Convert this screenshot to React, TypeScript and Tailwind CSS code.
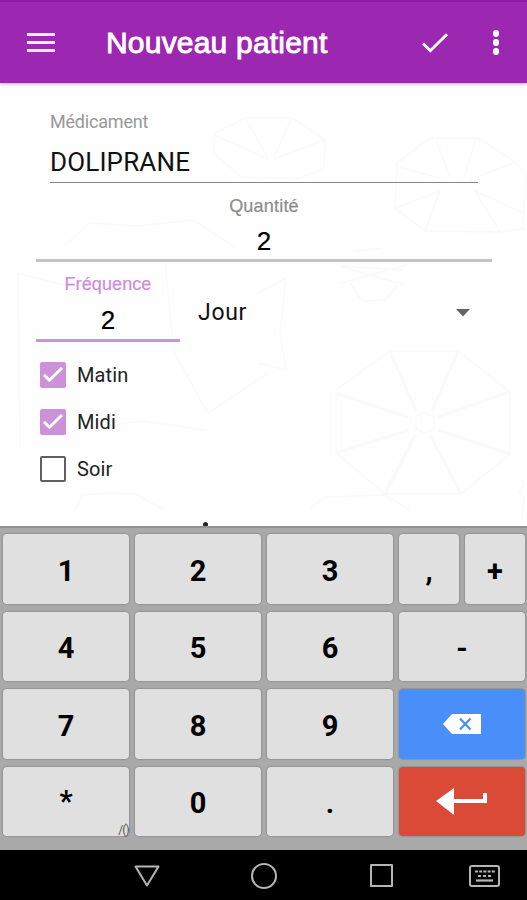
import React from "react";

function Check({ className, weight = 2.9 }: { className: string; weight?: number }) {
  return (
    <svg viewBox="0 0 26 20" className={className} fill="none" stroke="#fff" strokeWidth={weight}>
      <path d="M1 10.5 8.3 17.8 25 1.2" />
    </svg>
  );
}

function Backdrop() {
  return (
    <svg viewBox="0 0 527 443" className="absolute inset-0 h-full w-full" fill="none" stroke="#fafafa" strokeWidth="1.5">
      <path d="M390 268 458 268 510 309 510 371 461 411 385 411 336 370 336 307Z" />
      <path d="M390 268 416 328M458 268 432 328M336 310 408 334M510 309 438 334M336 370 408 347M510 371 438 347M385 411 415 352M461 411 430 352" strokeWidth="3" />
      <path d="M416 334 424 329 434 334 434 346 424 350 416 346Z" />
      <path d="M430 55 478 55 515 79 526 91 523 146 500 149 425 148 395 125 397 80Z M436 57 450 94M476 55 465 92M399 84 440 95M515 79 470 97M395 125 440 108 425 148M500 149 475 108 523 130" />
      <path d="M245 35 292 35 325 57 324 86 296 96 241 94 214 70 215 50Z M245 35 268 75M292 35 274 74M214 52 268 76M325 57 274 76" />
      <path d="M341 183 403 187M341 200 407 182M342 184 405 202M350 200 362 218 385 217 398 202M354 168 382 165" />
      <path d="M65 162 90 140 137 143 193 137 235 164M18 190 75 205M18 190 20 365M165 180 174 269 208 330 269 289M100 343 145 338 205 347M258 210 286 195 280 250 286 287 258 280" />
      <path d="M75 427 82 412 108 410 135 411 165 427M310 425 325 414 385 412 410 427M519 395 524 401 519 409 524 414 522 437" />
    </svg>
  );
}

function CheckRow({ label, checked }: { label: string; checked: boolean }) {
  return (
    <label className="flex h-[47px] items-center">
      <span
        className={
          checked
            ? "flex size-[26px] items-center justify-center rounded-[2px] bg-[#cc91d8]"
            : "block size-[26px] rounded-[2px] border-2 border-[#606060] bg-white"
        }
      >
        {checked && <Check className="h-[15px] w-5" weight={3.8} />}
      </span>
      <span className="ml-[11px] pt-px text-[20px] leading-6 tracking-[0.1px] text-[#222]">{label}</span>
    </label>
  );
}

function Key({ children, className = "bg-[#e0e0e0] pt-[5px]" }: { children: React.ReactNode; className?: string }) {
  return (
    <div
      className={`relative flex min-w-0 flex-1 items-center justify-center rounded-[4px] text-[29px] font-bold leading-none text-black shadow-[0_0_1px_1px_#949494] ${className}`}
    >
      {children}
    </div>
  );
}

export default function App() {
  return (
    <div className="flex h-[900px] w-[527px] flex-col overflow-hidden bg-[#fefefe] font-['Roboto',sans-serif]">
      <header className="relative z-10 flex h-[83px] shrink-0 items-center border-t-2 border-[#911ca3] bg-[#9c27b0] shadow-[0_1px_4px_rgba(0,0,0,0.3)]">
        <div className="ml-[27px] flex w-[28px] flex-col gap-[5px]">
          <span className="h-[3px] bg-[#fdeeff]" />
          <span className="h-[3px] bg-[#fdeeff]" />
          <span className="h-[3px] bg-[#fdeeff]" />
        </div>
        <h1 className="ml-[51px] whitespace-nowrap font-['Liberation_Sans',sans-serif] text-[30px] font-normal leading-9 tracking-[0.2px] text-white [-webkit-text-stroke:0.9px_white]">
          Nouveau patient
        </h1>
        <div className="mr-[28px] ml-auto flex items-center">
          <Check className="mr-[45px] h-[20px] w-[26px]" />
          <div className="flex flex-col gap-[2.5px]">
            <span className="size-[6.5px] rounded-full bg-white" />
            <span className="size-[6.5px] rounded-full bg-white" />
            <span className="size-[6.5px] rounded-full bg-white" />
          </div>
        </div>
      </header>

      <main className="relative h-[443px] shrink-0 overflow-hidden">
        <Backdrop />
        <div className="relative flex flex-col">
          <div className="mr-[49px] ml-[50px] flex h-[100px] flex-col border-b-[1.5px] border-[#858585] pt-[28px]">
            <span className="text-[18px] leading-[22px] tracking-[-0.2px] text-[#999]">Médicament</span>
            <span className="mt-[13px] text-[26px] leading-[32px] tracking-[0.15px] text-[#111]">DOLIPRANE</span>
          </div>
          <div className="mr-[35px] ml-[36px] flex h-[79px] flex-col items-center border-b-[3px] border-[#c3c3c3] pt-[12px] font-['Liberation_Sans',sans-serif]">
            <span className="text-[18px] leading-[22px] tracking-[0.2px] text-[#8c8c8c] [-webkit-text-stroke:0.2px_#8c8c8c]">Quantité</span>
            <span className="mt-[9px] text-[26px] leading-[30px] text-black [-webkit-text-stroke:0.2px_black]">2</span>
          </div>
          <div className="mr-[35px] ml-[36px] flex h-[80px]">
            <div className="flex w-[144px] flex-col items-center border-b-[3px] border-[#cc91d8] pt-[11px] font-['Liberation_Sans',sans-serif]">
              <span className="text-[18px] leading-[22px] tracking-[0.1px] text-[#d08bdc] [-webkit-text-stroke:0.2px_#d08bdc]">Fréquence</span>
              <span className="mt-[10px] text-[26px] leading-[30px] text-black [-webkit-text-stroke:0.2px_black]">2</span>
            </div>
            <div className="ml-[18px] flex flex-1 items-start justify-between pt-[36px] pr-[22px]">
              <span className="text-[23px] leading-[30px] tracking-[0.7px] text-[#111]">Jour</span>
              <svg viewBox="0 0 14 8" className="mt-[11px] h-[8px] w-[14px]">
                <path d="M0 0h14L7 7.5z" fill="#646464" />
              </svg>
            </div>
          </div>
          <div className="ml-10 flex flex-col pt-[9px]">
            <CheckRow label="Matin" checked />
            <CheckRow label="Midi" checked />
            <CheckRow label="Soir" checked={false} />
          </div>
          <div className="mt-[30px] ml-[203px] size-[5px] rounded-full bg-[#222]" />
        </div>
      </main>

      <section className="flex h-[323.5px] shrink-0 flex-col gap-2 border-t-2 border-[#929292] bg-[#a9a9a9] pt-[6px] pr-[2px] pb-[13.5px] pl-[3px]">
        <div className="flex flex-1 gap-[6px]">
          <Key>1</Key>
          <Key>2</Key>
          <Key>3</Key>
          <div className="flex min-w-0 flex-1 gap-[6px]">
            <Key>,</Key>
            <Key>+</Key>
          </div>
        </div>
        <div className="flex flex-1 gap-[6px]">
          <Key>4</Key>
          <Key>5</Key>
          <Key>6</Key>
          <Key>-</Key>
        </div>
        <div className="flex flex-1 gap-[6px]">
          <Key>7</Key>
          <Key>8</Key>
          <Key>9</Key>
          <Key className="bg-[#4a8ef9]">
            <svg viewBox="0 0 38 20" className="h-5 w-[38px]">
              <path d="M0 10 9 0h29v20H9z" fill="#fff" />
              <path d="m17 4.5 10.5 11M27.5 4.5 17 15.5" stroke="#4a8ef9" strokeWidth="2.2" fill="none" />
            </svg>
          </Key>
        </div>
        <div className="flex flex-1 gap-[6px]">
          <Key className="bg-[#e0e0e0] pt-px">
            *
            <span className="absolute right-0 bottom-0 text-[12px] font-normal leading-[12px] tracking-[-0.8px] text-[#555]">/()</span>
          </Key>
          <Key>0</Key>
          <Key>.</Key>
          <Key className="bg-[#db4937]">
            <svg viewBox="0 0 52 28" className="h-7 w-[52px]">
              <path d="M0 14 18 1v11h29V6h4v10H18v12z" fill="#fff" />
            </svg>
          </Key>
        </div>
      </section>

      <nav className="flex flex-1 items-center bg-black pt-[2px]">
        <svg viewBox="0 0 26 22" className="ml-[134px] h-[22px] w-[26px]" fill="none" stroke="#b5b5b5" strokeWidth="2" strokeLinejoin="round">
          <path d="M1.5 1.5h23L13 20.5z" />
        </svg>
        <span className="ml-[91px] size-[26px] rounded-full border-2 border-[#b5b5b5]" />
        <span className="ml-[93px] size-[23px] rounded-[1px] border-2 border-[#b5b5b5]" />
        <svg viewBox="0 0 31 22" className="ml-[76px] h-[22px] w-[31px]" fill="none" stroke="#b5b5b5">
          <rect x="1" y="1" width="29" height="20" rx="2" strokeWidth="2" />
          <path d="M6 6.5h20" strokeWidth="2.2" strokeDasharray="3 1.2" />
          <path d="M9 11h14" strokeWidth="2.2" strokeDasharray="3 2" />
          <path d="M7 15.5h17" strokeWidth="2.2" />
        </svg>
      </nav>
    </div>
  );
}
